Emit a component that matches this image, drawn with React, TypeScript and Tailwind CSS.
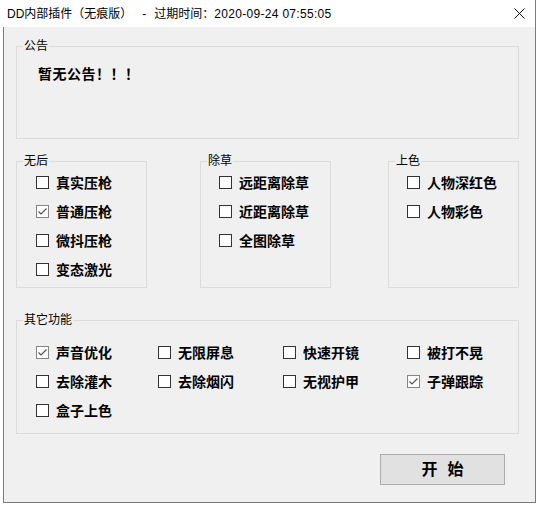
import React from 'react';

const FONT = { fontFamily: '"Liberation Sans", "Noto Sans CJK SC", sans-serif' };

type CheckProps = { label: string; checked?: boolean };

const Check: React.FC<CheckProps> = ({ label, checked = false }) => (
  <div className="flex h-[29px] items-center gap-[7px]">
    <span
      className={`flex h-[13px] w-[13px] shrink-0 items-center justify-center border bg-white ${
        checked ? 'border-[#858585]' : 'border-[#333333]'
      }`}
    >
      {checked && (
        <svg width="11" height="11" viewBox="0 0 11 11" fill="none">
          <polyline points="1.5,5.5 4,8 9.5,2.5" stroke="#555" strokeWidth="1.2" />
        </svg>
      )}
    </span>
    <span className="whitespace-nowrap text-[14px] font-bold leading-[20px] text-black">{label}</span>
  </div>
);

type GroupProps = { title: string; className?: string; children?: React.ReactNode };

const Group: React.FC<GroupProps> = ({ title, className = '', children }) => (
  <div className={`relative border border-[#dcdcdc] ${className}`}>
    <span className="absolute -top-[9px] left-[6px] bg-[#f0f0f0] px-[1px] text-[12px] leading-[16px] text-black">
      {title}
    </span>
    {children}
  </div>
);

export default function App() {
  return (
    <div className="min-h-[505px] bg-white" style={FONT}>
      <div className="ml-[3px] flex h-[503px] w-[533px] flex-col">
        {/* title bar */}
        <div className="flex h-[27px] items-center justify-between border-r border-[#7a7a7a] bg-white pl-[4px] pr-[10px]">
          <div className="flex items-center text-[12px] leading-[16px] text-black">
            <span>DD内部插件（无痕版）</span>
            <span className="ml-[10px]">-</span>
            <span className="ml-[8px]">过期时间：</span>
            <span className="tracking-[0.3px]">2020-09-24 07:55:05</span>
          </div>
          <svg width="11" height="11" viewBox="0 0 11 11" fill="none">
            <path d="M0.5 0.5 L10.5 10.5 M10.5 0.5 L0.5 10.5" stroke="#111" strokeWidth="1" />
          </svg>
        </div>

        {/* body */}
        <div className="flex h-[476px] flex-col border-x border-b border-[#7a7a7a] bg-[#f0f0f0] pl-[12px] pr-[16px] pt-[19px]">
          <Group title="公告" className="h-[93px] pl-[21px] pt-[17px]">
            <p className="text-[14px] font-bold leading-[20px] tracking-[0.5px] text-black">暂无公告！！！</p>
          </Group>

          <div className="mt-[22px] flex">
            <Group title="无后" className="h-[127px] w-[131px] pl-[19px] pt-[6px]">
              <Check label="真实压枪" />
              <Check label="普通压枪" checked />
              <Check label="微抖压枪" />
              <Check label="变态激光" />
            </Group>
            <Group title="除草" className="ml-[53px] h-[127px] w-[131px] pl-[18px] pt-[6px]">
              <Check label="远距离除草" />
              <Check label="近距离除草" />
              <Check label="全图除草" />
            </Group>
            <Group title="上色" className="ml-[57px] h-[127px] w-[131px] pl-[18px] pt-[6px]">
              <Check label="人物深红色" />
              <Check label="人物彩色" />
            </Group>
          </div>

          <Group title="其它功能" className="mt-[32px] h-[114px] pl-[19px] pt-[17px]">
            <div className="grid grid-cols-[122px_125px_124px_1fr]">
              <Check label="声音优化" checked />
              <Check label="无限屏息" />
              <Check label="快速开镜" />
              <Check label="被打不晃" />
              <Check label="去除灌木" />
              <Check label="去除烟闪" />
              <Check label="无视护甲" />
              <Check label="子弹跟踪" checked />
              <Check label="盒子上色" />
            </div>
          </Group>

          <button className="mr-[14px] mt-[20px] flex h-[31px] w-[125px] items-center justify-center gap-[10px] self-end border border-[#adadad] bg-[#e1e1e1] text-[16px] font-bold leading-[20px] text-black">
            <span>开</span>
            <span>始</span>
          </button>
        </div>
      </div>
    </div>
  );
}
